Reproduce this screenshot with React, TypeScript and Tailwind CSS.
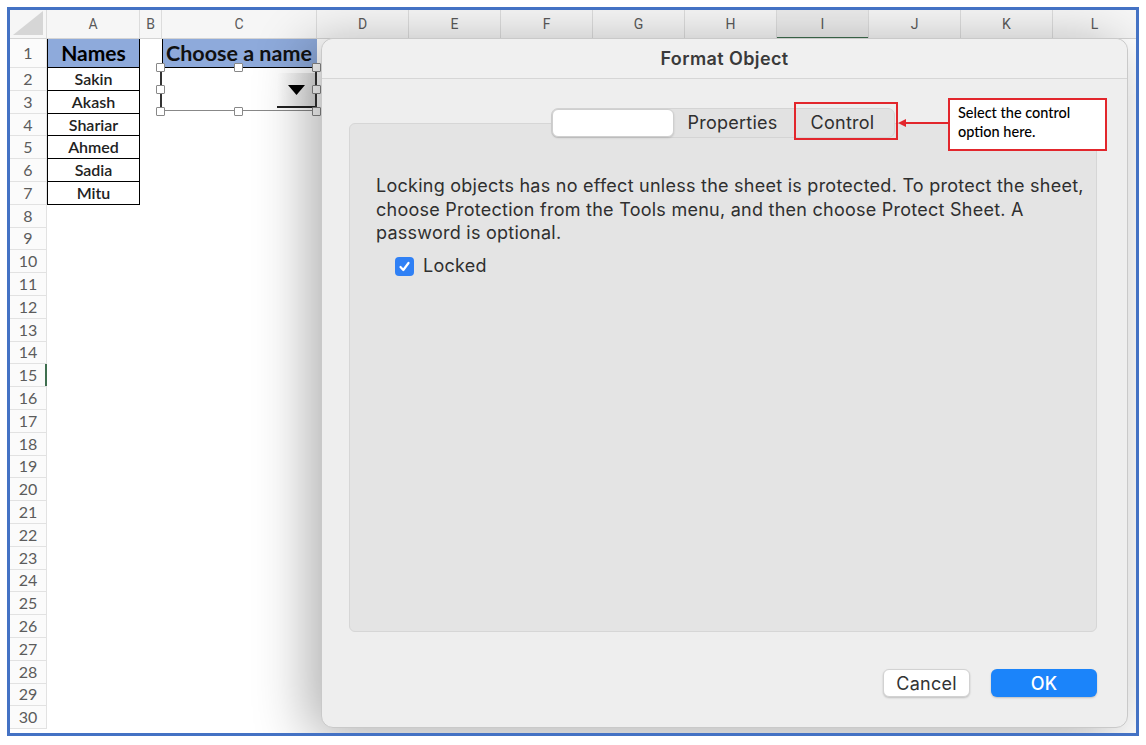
import React from "react";

const cols = ["D", "E", "F", "G", "H", "I", "J", "K"];
const names = ["Sakin", "Akash", "Shariar", "Ahmed", "Sadia", "Mitu"];
const rows = Array.from({ length: 29 }, (_, i) => i + 2);

const sheetFont = { fontFamily: "Lato, 'Open Sans', sans-serif" };
const macFont = { fontFamily: "Inter, 'Liberation Sans', sans-serif" };

const Header = () => (
  <div className="flex h-[29px] shrink-0 border-b border-[#d4d4d4] bg-[#f6f6f6] text-[14px] text-[#5a5a5a] font-[Roboto,sans-serif]">
    <div className="w-[37px] shrink-0 border-r border-[#dcdcdc] flex items-end justify-end p-[3px]">
      <svg width="30" height="24" viewBox="0 0 30 24">
        <polygon points="0,24 30,0 30,24" fill="#d6d6d6" />
      </svg>
    </div>
    <div className="w-[93px] shrink-0 border-r border-[#dcdcdc] flex items-center justify-center">A</div>
    <div className="w-[22px] shrink-0 border-r border-[#dcdcdc] flex items-center justify-center">B</div>
    <div className="w-[155px] shrink-0 border-r border-[#dcdcdc] flex items-center justify-center">C</div>
    {cols.map((c) => (
      <div
        key={c}
        className={`relative w-[92px] shrink-0 border-r border-[#dcdcdc] flex items-center justify-center ${
          c === "I" ? "bg-[#ececec]" : ""
        }`}
      >
        {c}
        {c === "I" && <div className="absolute left-0 right-0 bottom-[-1px] h-[2px] bg-[#3f6f4f]" />}
      </div>
    ))}
    <div className="flex-1 flex items-center justify-center">L</div>
  </div>
);

const RowHead = ({ n }: { n: number }) => (
  <div
    className={`relative w-[37px] shrink-0 border-r border-b border-[#e2e2e2] bg-[#fbfbfb] flex items-center justify-center text-[16px] text-[#5c5c5c] ${
      n === 15 ? "bg-[#ececec]" : ""
    }`}
    style={sheetFont}
  >
    {n}
    {n === 15 && <div className="absolute right-[-1px] top-0 bottom-0 w-[2px] bg-[#3f6f4f]" />}
  </div>
);

const Sheet = () => (
  <div className="flex flex-col">
    <Header />
    {/* row 1 */}
    <div className="flex h-[29px] shrink-0" style={sheetFont}>
      <RowHead n={1} />
      <div className="w-[93px] shrink-0 bg-[#8eaadb] border border-t-0 border-black flex items-center justify-center text-[21px] font-bold text-black">
        Names
      </div>
      <div className="w-[22px] shrink-0" />
      <div className="w-[155px] shrink-0 bg-[#8eaadb] border-l border-b border-black flex items-center pl-[3px] text-[21.5px] font-bold text-[#111] whitespace-nowrap">
        Choose a name
      </div>
      <div className="flex-1" />
    </div>
    {rows.map((n) => (
      <div key={n} className="flex h-[22.8px] shrink-0" style={sheetFont}>
        <RowHead n={n} />
        {n <= 7 ? (
          <div className="w-[93px] shrink-0 border-x border-b border-black flex items-center justify-center text-[16px] font-semibold text-[#222]">
            {names[n - 2]}
          </div>
        ) : (
          <div className="w-[93px] shrink-0" />
        )}
        <div className="flex-1" />
      </div>
    ))}
  </div>
);

const FormControl = () => (
  <>
    {/* dropdown button */}
    <div className="absolute left-[267px] top-[63px] w-[39px] h-[35px] bg-gradient-to-r from-white to-[#dedede] flex items-center justify-center border-b-2 border-[#222]">
      <svg width="17" height="10" viewBox="0 0 17 10">
        <polygon points="0,0 17,0 8.5,10" fill="#000" />
      </svg>
    </div>
    {/* frame lines */}
    <div className="absolute left-[150px] top-[60px] w-[2px] h-[41px] bg-[#333]" />
    <div className="absolute left-[305px] top-[60px] w-[2px] h-[41px] bg-[#333]" />
    <div className="absolute left-[150px] top-[100px] w-[156px] h-[1px] bg-[#888]" />
    {/* handles */}
    <div className="absolute left-[146px] top-[53px] w-[9px] h-[9px] bg-white border border-[#888] rounded-[1px]" />
    <div className="absolute left-[224px] top-[53px] w-[9px] h-[9px] bg-white border border-[#888] rounded-[1px]" />
    <div className="absolute left-[302px] top-[53px] w-[9px] h-[9px] bg-white border border-[#888] rounded-[1px]" />
    <div className="absolute left-[146px] top-[75px] w-[9px] h-[9px] bg-white border border-[#888] rounded-[1px]" />
    <div className="absolute left-[302px] top-[75px] w-[9px] h-[9px] bg-white border border-[#888] rounded-[1px]" />
    <div className="absolute left-[146px] top-[97px] w-[9px] h-[9px] bg-white border border-[#888] rounded-[1px]" />
    <div className="absolute left-[224px] top-[97px] w-[9px] h-[9px] bg-white border border-[#888] rounded-[1px]" />
    <div className="absolute left-[302px] top-[97px] w-[9px] h-[9px] bg-white border border-[#888] rounded-[1px]" />
  </>
);

const Dialog = () => (
  <div
    className="absolute left-[311px] top-[28px] w-[807px] h-[690px] rounded-[12px] bg-[#eeeeee] border border-[#c9c9c9] shadow-[-12px_8px_55px_rgba(0,0,0,0.32)] flex flex-col"
    style={macFont}
  >
    <div className="h-[40px] shrink-0 border-b border-[#d6d6d6] bg-[#f0f0f0] rounded-t-[12px] flex items-center justify-center text-[18px] tracking-[0.4px] font-semibold text-[#3a3a3a]">
      Format Object
    </div>

    {/* group panel */}
    <div className="relative mt-[44px] ml-[27px] mr-[30px] h-[509px] rounded-[6px] border border-[#d6d6d6] bg-[#e4e4e4] px-[26px] pt-[50px] text-[18px] tracking-[0.25px] text-[#2f2f2f] leading-[23.5px]">
      <div className="absolute left-1/2 -translate-x-1/2 top-[-16px] flex h-[30px] w-[344px] rounded-[7px] bg-[#e2e2e2] border border-[#d4d4d4]">
        <div className="w-[122px] h-full rounded-[6px] bg-white border border-[#cfcfcf] shadow-[0_1px_2px_rgba(0,0,0,0.15)]" />
        <div className="w-[117px] flex items-center justify-center">Properties</div>
        <div className="flex-1 flex items-center justify-center">Control</div>
      </div>
      <p className="whitespace-nowrap">
        Locking objects has no effect unless the sheet is protected. To protect the sheet,
        <br />
        choose Protection from the Tools menu, and then choose Protect Sheet. A
        <br />
        password is optional.
      </p>
      <div className="mt-[10px] ml-[19px] flex items-center gap-[9px] h-[23px]">
        <div className="w-[19px] h-[19px] rounded-[4px] bg-[#2f80f5] flex items-center justify-center">
          <svg width="13" height="13" viewBox="0 0 13 13">
            <path d="M2.5 7 L5.3 10 L10.5 3" stroke="white" strokeWidth="2.2" fill="none" strokeLinecap="round" strokeLinejoin="round" />
          </svg>
        </div>
        <span>Locked</span>
      </div>
    </div>

    {/* buttons */}
    <div className="mt-[37px] mr-[30px] flex justify-end gap-[21px] text-[18px] tracking-[0.25px]">
      <button className="w-[87px] h-[28px] rounded-[6px] bg-white text-[#333] border border-[#d2d2d2] shadow-[0_1px_2px_rgba(0,0,0,0.2)]">
        Cancel
      </button>
      <button className="w-[106px] h-[28px] rounded-[6px] bg-[#1b84fa] text-white font-medium shadow-[0_1px_2px_rgba(0,0,0,0.2)]">
        OK
      </button>
    </div>

    {/* annotation */}
    <div className="absolute left-[472px] top-[63px] w-[104px] h-[38px] border-2 border-[#e2262c]" />
    <svg className="absolute left-[576px] top-[78px]" width="52" height="12" viewBox="0 0 52 12">
      <line x1="6" y1="6" x2="52" y2="6" stroke="#e2262c" strokeWidth="2" />
      <polygon points="0,6 8,2 8,10" fill="#e2262c" />
    </svg>
    <div
      className="absolute left-[626px] top-[59px] w-[159px] h-[53px] border-2 border-[#e2262c] bg-white pl-[8px] pt-[3px] text-[14.5px] leading-[19px] font-medium text-black"
      style={sheetFont}
    >
      Select the control
      <br />
      option here.
    </div>
  </div>
);

export default function App() {
  return (
    <div className="w-[1146px] h-[745px] bg-white p-[7px]">
      <div className="w-[1132px] h-[729px] border-[3px] border-[#4472c4] overflow-hidden">
        <div className="relative w-full h-full bg-white">
          <Sheet />
          <FormControl />
          <Dialog />
        </div>
      </div>
    </div>
  );
}
